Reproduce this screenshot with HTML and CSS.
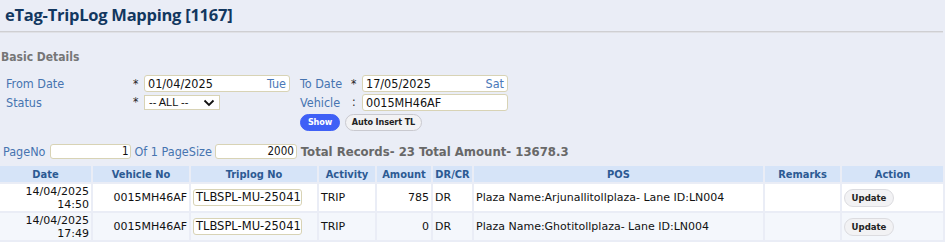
FILE: index.html
```html
<!DOCTYPE html>
<html>
<head>
<meta charset="utf-8">
<link rel="stylesheet" href="styles.css">
</head>
<body>
<div class="page">
  <h1 class="title">eTag-TripLog Mapping [1167]</h1>
  <div class="rule"></div>
  <h2 class="section">Basic Details</h2>
  <div class="form">
    <span class="lbl">From Date</span>
    <span class="req">*</span>
    <div class="inp date"><span>01/04/2025</span><span class="day">Tue</span></div>
    <span class="sp"></span>
    <span class="lbl">To Date</span>
    <span class="req">*</span>
    <div class="inp date"><span>17/05/2025</span><span class="day">Sat</span></div>

    <span class="lbl">Status</span>
    <span class="req">*</span>
    <div class="cell-left"><div class="sel"><span>-- ALL --</span><svg class="chev" width="12" height="8" viewBox="0 0 12 8"><path d="M1.5 1.5 L6 6 L10.5 1.5" fill="none" stroke="#111" stroke-width="1.8"/></svg></div></div>
    <span class="sp"></span>
    <span class="lbl">Vehicle</span>
    <span class="req colon">:</span>
    <div class="inp"><span>0015MH46AF</span></div>

    <span></span><span></span><span></span><span></span>
    <div class="btns"><button class="btn primary">Show</button><button class="btn auto">Auto Insert TL</button></div>
  </div>
  <div class="pager">
    <span class="plbl">PageNo</span>
    <div class="pinp p1">1</div>
    <span class="plbl">Of 1 PageSize</span>
    <div class="pinp p2">2000</div>
    <span class="totals">Total Records- 23 Total Amount- 13678.3</span>
  </div>
  <table class="grid">
    <colgroup>
      <col class="c1"><col class="c2"><col class="c3"><col class="c4"><col class="c5"><col class="c6"><col class="c7"><col class="c8"><col>
    </colgroup>
    <thead>
      <tr><th>Date</th><th>Vehicle No</th><th>Triplog No</th><th>Activity</th><th>Amount</th><th>DR/CR</th><th>POS</th><th>Remarks</th><th>Action</th></tr>
    </thead>
    <tbody>
      <tr>
        <td class="r">14/04/2025<br>14:50</td>
        <td class="r">0015MH46AF</td>
        <td><div class="tl">TLBSPL-MU-25041</div></td>
        <td>TRIP</td>
        <td class="r">785</td>
        <td>DR</td>
        <td>Plaza Name:Arjunallitollplaza- Lane ID:LN004</td>
        <td></td>
        <td><button class="upd">Update</button></td>
      </tr>
      <tr class="alt">
        <td class="r">14/04/2025<br>17:49</td>
        <td class="r">0015MH46AF</td>
        <td><div class="tl">TLBSPL-MU-25041</div></td>
        <td>TRIP</td>
        <td class="r">0</td>
        <td>DR</td>
        <td>Plaza Name:Ghotitollplaza- Lane ID:LN004</td>
        <td></td>
        <td><button class="upd">Update</button></td>
      </tr>
    </tbody>
  </table>
</div>
</body>
</html>
```
FILE: styles.css
```css
* { box-sizing: border-box; }
html, body { margin: 0; padding: 0; background: #eaedf6; }
body { font-family: "DejaVu Sans", Verdana, sans-serif; font-size: 11px; color: #111; }
.page { width: 945px; height: 242px; overflow: hidden; }
.title {
  margin: 0; padding: 3px 0 0 5px; height: 31px;
  font-family: "Open Sans", sans-serif; font-weight: 700; font-size: 16.5px; color: #12375f;
  letter-spacing: -0.25px;
}
.rule { height: 2px; border-top: 1px solid #cfcfd2; border-bottom: 1px solid #e0e1e6; margin-right: 2px; }
.section {
  margin: 0; padding: 17px 0 0 1px; height: 42px;
  font-family: "DejaVu Sans Condensed", "DejaVu Sans", sans-serif; font-weight: 700; font-size: 12px; color: #767676;
}
.form {
  display: grid;
  grid-template-columns: 127px 11px 146px 10px 51px 11px 146px;
  grid-template-rows: 17px 16px 20px;
  row-gap: 2px;
  padding-left: 6px;
  align-items: center;
  font-family: "DejaVu Sans Condensed", "DejaVu Sans", sans-serif;
}
.lbl { color: #4674b0; font-size: 12.5px; }
.req { font-size: 12px; color: #222; padding-left: 0; }
.colon { padding-left: 1px; }
.inp {
  height: 17px; background: #fff; border: 1px solid #d8d3b5; border-radius: 3px;
  display: flex; justify-content: space-between; align-items: center;
  padding: 0 3px 0 3px; font-size: 12.5px; color: #111;
}
.day { color: #4a78b8; }
.cell-left { display: flex; }
.sel {
  width: 76px; height: 15px; background: #fff; border: 1px solid #d8d3b5;
  display: flex; justify-content: space-between; align-items: center; padding: 0 4px 0 4px;
  font-family: "Liberation Sans", Arial, sans-serif; font-size: 11px;
}
.chev { margin-top: 1px; }
.btns { grid-column: 5 / 8; display: flex; gap: 5px; align-items: center; padding-top: 1px; }
.btn {
  height: 17px; border-radius: 9px; border: 1px solid #c9c9cf; background: #f2f2f4;
  font-family: "DejaVu Sans Condensed", "DejaVu Sans", sans-serif; font-weight: 700; font-size: 9px; color: #222;
  padding: 0; line-height: 15px; white-space: nowrap; letter-spacing: -0.1px;
}
.btn.auto { width: 77px; }
.btn.primary { background: #3f60f6; border-color: #3f60f6; color: #fff; width: 40px; }
.pager {
  display: flex; align-items: center; height: 16px; margin-top: 11px; padding-left: 3px; gap: 0;
  font-family: "DejaVu Sans Condensed", "DejaVu Sans", sans-serif;
}
.plbl { color: #4674b0; font-size: 12.5px; }
.pinp {
  height: 15px; background: #fff; border: 1px solid #d8d3b5; border-radius: 3px; text-align: right;
  padding: 0 2px; font-size: 11.5px; line-height: 13px;
}
.p1 { width: 81px; margin: 0 3px 0 5px; }
.p2 { width: 82px; margin: 0 4px 0 3px; }
.totals { font-weight: 700; color: #686868; font-size: 13px; }
.grid {
  margin-top: 5px; width: 947px; border-collapse: separate; border-spacing: 2px; table-layout: fixed;
  margin-left: -2px;
}
.c1 { width: 91px; }
.c2 { width: 96px; }
.c3 { width: 126px; }
.c4 { width: 56px; }
.c5 { width: 54px; }
.c6 { width: 39px; }
.c7 { width: 289px; }
.c8 { width: 75px; }
.grid th {
  background: #d6e4f8; color: #2c5a93; font-weight: 700; height: 16px; padding: 0;
  font-family: "DejaVu Sans Condensed", "DejaVu Sans", sans-serif; font-size: 11px; text-align: center;
}
.grid td { background: #fff; height: 27px; padding: 0 2px; font-size: 11px; vertical-align: middle; white-space: nowrap; overflow: hidden; }
.grid tr.alt td { background: #f4f7fc; }
.grid td.r { text-align: right; }
.tl {
  border: 1px solid #d8d3b5; border-radius: 3px; background: #fff; height: 17px; line-height: 15px;
  font-size: 11.5px; padding: 0 1px 0 2px; overflow: hidden; width: 109px; white-space: nowrap;
}
.upd {
  height: 18px; width: 50px; border-radius: 9px; border: 1px solid #dcdce0; background: #f2f2f4;
  font-family: "DejaVu Sans Condensed", "DejaVu Sans", sans-serif; font-weight: 700; font-size: 9.5px; color: #222; padding: 0;
}
```
